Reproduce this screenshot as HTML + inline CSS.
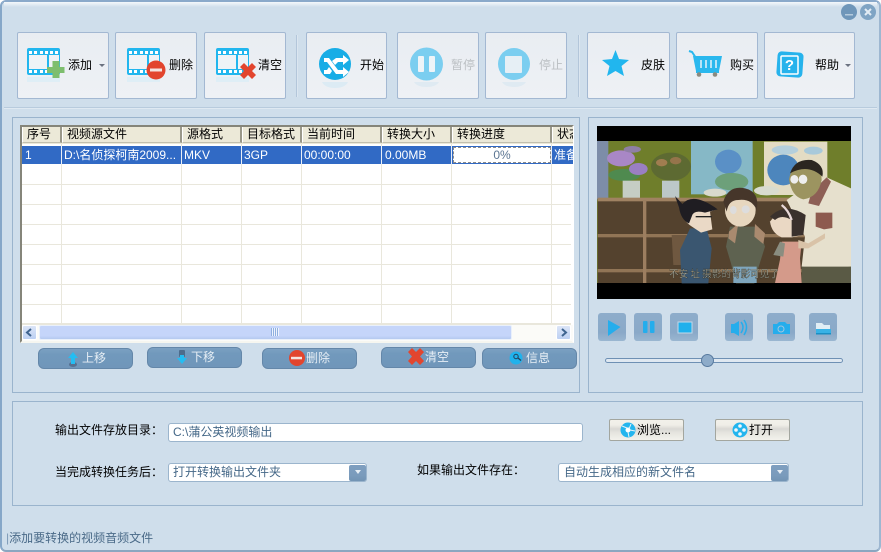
<!DOCTYPE html>
<html><head><meta charset="utf-8"><style>
html,body{margin:0;padding:0;width:881px;height:552px;overflow:hidden;background:#fff}
*{box-sizing:border-box}
body{font:12px/16px "WenQuanYi Zen Hei","Liberation Sans","Noto Sans CJK SC",sans-serif;color:#000;position:relative}
.a{position:absolute}
.t{position:absolute;white-space:nowrap;height:16px;line-height:16px}
#win{left:0;top:0;width:881px;height:552px;background:#cfdeeb;border:2px solid #86a7c8;border-top:2px solid #8aa9ca;border-radius:6px;border-right-color:#9db7d1;border-bottom-color:#8ba6c0}
#shine{left:4px;top:2px;width:873px;height:5px;background:linear-gradient(#f4f8fb,#cfdeeb)}
.tb{position:absolute;top:32px;height:67px;background:linear-gradient(#e9edf2,#eef1f5);border:1px solid #a3b8d2;border-radius:2px}
.sep{position:absolute;top:35px;height:62px;width:2px;background:#b3c6da;border-right:1px solid #dbe6f0}
.panel{position:absolute;border:1px solid #9ab4cd;background:#cfdeeb}
.bb{position:absolute;width:95px;height:21px;background:linear-gradient(#7ba0c2 0,#7199bc 30%,#7096ba 100%);border:1px solid #6487a9;border-radius:6px}
.cb{position:absolute;top:313px;width:28px;height:28px;background:linear-gradient(#8eadcb,#8aa9c8 70%,#9ab6d0);border-radius:3px}
.col{position:absolute;top:144px;width:1px;height:180px;background:#e9e7dc}
.row{position:absolute;left:22px;width:549px;height:1px;background:#e9e7dc}
.h{position:absolute;top:127px;height:16px;background:#ece9d8;border-right:2px solid #9a988a;border-left:1px solid #fff;border-bottom:1px solid #c2bfae;line-height:15px;white-space:nowrap;overflow:hidden;padding-left:4px}
.inp{position:absolute;background:#fff;border:1px solid #9bb5cd;border-radius:3px;color:#456888;padding-left:4px;line-height:17px;white-space:nowrap}
.wb{position:absolute;top:419px;width:75px;height:22px;background:linear-gradient(#f2f1ea 0,#f0eee8 25%,#d9d8d4 45%,#e4e3de 60%,#f3f2ec 100%);border:1px solid #a3a69f;border-radius:2px}
.arr{position:absolute;top:465px;width:17px;height:16px;background:linear-gradient(#7f9fc0,#7a9bbc 65%,#7294b4);border-radius:2px}
</style></head><body>
<div id="win" class="a"></div>
<div id="shine" class="a"></div>
<div class="a" style="left:4px;top:107px;width:873px;height:2px;background:#b8cbdd;border-bottom:1px solid #dfe9f2"></div>

<div class="tb" style="left:17px;width:92px"></div>
<div class="tb" style="left:115px;width:82px"></div>
<div class="tb" style="left:204px;width:82px"></div>
<div class="sep" style="left:296px"></div>
<div class="tb" style="left:306px;width:81px"></div>
<div class="tb" style="left:397px;width:82px"></div>
<div class="tb" style="left:485px;width:82px"></div>
<div class="sep" style="left:578px"></div>
<div class="tb" style="left:587px;width:83px"></div>
<div class="tb" style="left:676px;width:82px"></div>
<div class="tb" style="left:764px;width:91px"></div>

<div class="t" style="left:68px;top:57px">添加</div>
<div class="t" style="left:169px;top:57px">删除</div>
<div class="t" style="left:258px;top:57px">清空</div>
<div class="t" style="left:360px;top:57px">开始</div>
<div class="t" style="left:451px;top:57px;color:#bbbfc3">暂停</div>
<div class="t" style="left:539px;top:57px;color:#bbbfc3">停止</div>
<div class="t" style="left:641px;top:57px">皮肤</div>
<div class="t" style="left:730px;top:57px">购买</div>
<div class="t" style="left:815px;top:57px">帮助</div>

<div class="panel" style="left:12px;top:117px;width:568px;height:276px"></div>
<div class="panel" style="left:588px;top:117px;width:275px;height:276px"></div>
<div class="panel" style="left:12px;top:401px;width:851px;height:105px"></div>

<!-- list -->
<div class="a" style="left:20px;top:125px;width:554px;height:218px;background:#fff;border:2px solid;border-color:#85857a #fff #f6f6f0 #85857a"></div>
<div class="a" style="left:22px;top:127px;width:551px;height:17px;background:#ece9d8"></div>
<div class="h" style="left:22px;width:40px;padding-left:4px">序号</div>
<div class="h" style="left:62px;width:120px">视频源文件</div>
<div class="h" style="left:182px;width:60px">源格式</div>
<div class="h" style="left:242px;width:60px;padding-left:4px">目标格式</div>
<div class="h" style="left:302px;width:80px">当前时间</div>
<div class="h" style="left:382px;width:70px">转换大小</div>
<div class="h" style="left:452px;width:100px">转换进度</div>
<div class="h" style="left:552px;width:21px;border-right:0">状态</div>
<div class="col" style="left:61px"></div><div class="col" style="left:181px"></div><div class="col" style="left:241px"></div><div class="col" style="left:301px"></div><div class="col" style="left:381px"></div><div class="col" style="left:451px"></div><div class="col" style="left:551px"></div>
<div class="row" style="top:184px"></div><div class="row" style="top:204px"></div><div class="row" style="top:224px"></div><div class="row" style="top:244px"></div><div class="row" style="top:264px"></div><div class="row" style="top:284px"></div><div class="row" style="top:304px"></div><div class="row" style="top:323px;height:2px"></div>
<div class="a" style="left:22px;top:146px;width:551px;height:18px;background:#316ac5"></div>
<div class="a" style="left:61px;top:146px;width:1px;height:18px;background:#e9eef7"></div>
<div class="a" style="left:181px;top:146px;width:1px;height:18px;background:#e9eef7"></div>
<div class="a" style="left:241px;top:146px;width:1px;height:18px;background:#e9eef7"></div>
<div class="a" style="left:301px;top:146px;width:1px;height:18px;background:#e9eef7"></div>
<div class="a" style="left:381px;top:146px;width:1px;height:18px;background:#e9eef7"></div>
<div class="a" style="left:451px;top:146px;width:1px;height:18px;background:#e9eef7"></div>
<div class="a" style="left:551px;top:146px;width:1px;height:18px;background:#e9eef7"></div>
<div class="t" style="left:25px;top:147px;color:#fff">1</div>
<div class="t" style="left:64px;top:147px;color:#fff">D:\名侦探柯南2009...</div>
<div class="t" style="left:184px;top:147px;color:#fff">MKV</div>
<div class="t" style="left:244px;top:147px;color:#fff">3GP</div>
<div class="t" style="left:304px;top:147px;color:#fff">00:00:00</div>
<div class="t" style="left:385px;top:147px;color:#fff">0.00MB</div>
<div class="a" style="left:453px;top:147px;width:98px;height:16px;background:#fff;border:1px dashed #8b8b8b;text-align:center;line-height:14px;color:#5c7693">0%</div>
<div class="t" style="left:554px;top:147px;color:#fff;width:19px;overflow:hidden">准备</div>

<!-- scrollbar -->
<div class="a" style="left:22px;top:325px;width:551px;height:16px;background:#fbfbf8"></div>
<div class="a" style="left:22px;top:325px;width:15px;height:15px;background:linear-gradient(#dbe5f7,#bcd0f3);border:1px solid #fff;border-radius:2px"></div>
<div class="a" style="left:39px;top:325px;width:473px;height:15px;background:linear-gradient(#c5d5fa 75%,#b5c9ef);border:1px solid #e9f0fb;border-radius:2px"></div>
<div class="a" style="left:556px;top:325px;width:15px;height:15px;background:linear-gradient(#dbe5f7,#bcd0f3);border:1px solid #fff;border-radius:2px"></div>
<div class="a" style="left:271px;top:328px;width:8px;height:8px;background:repeating-linear-gradient(90deg,#8fb0e0 0 1px,#eef3fd 1px 2px)"></div>

<!-- list buttons -->
<div class="bb" style="left:38px;top:348px"></div>
<div class="bb" style="left:147px;top:347px"></div>
<div class="bb" style="left:262px;top:348px"></div>
<div class="bb" style="left:381px;top:347px"></div>
<div class="bb" style="left:482px;top:348px"></div>
<div class="t" style="left:82px;top:350px;color:#e6eef5">上移</div>
<div class="t" style="left:191px;top:349px;color:#e6eef5">下移</div>
<div class="t" style="left:306px;top:350px;color:#e6eef5">删除</div>
<div class="t" style="left:425px;top:349px;color:#e6eef5">清空</div>
<div class="t" style="left:526px;top:350px;color:#e6eef5">信息</div>

<!-- video -->
<svg class="a" style="left:597px;top:126px" width="254" height="173" viewBox="6 18 762 519" preserveAspectRatio="none">
<rect x="6" y="18" width="762" height="519" fill="#000"/>
<rect x="6" y="63" width="762" height="426" fill="#6f7e2b"/>
<rect x="6" y="63" width="34" height="175" fill="#7d8da8"/>
<rect x="288" y="63" width="185" height="160" fill="#86b8c6"/>
<ellipse cx="400" cy="125" rx="40" ry="36" fill="#5a90c6"/>
<ellipse cx="410" cy="185" rx="50" ry="26" fill="#6da07a"/>
<rect x="507" y="65" width="190" height="160" fill="#e3dcc4"/>
<ellipse cx="565" cy="150" rx="48" ry="46" fill="#4d86bd"/>
<ellipse cx="570" cy="90" rx="40" ry="14" fill="#b4cfdc"/>
<ellipse cx="655" cy="92" rx="28" ry="12" fill="#a8c9da"/>
<ellipse cx="360" cy="218" rx="34" ry="12" fill="#d9d9cd"/>
<ellipse cx="515" cy="212" rx="38" ry="14" fill="#d9dccf"/>
<ellipse cx="88" cy="165" rx="48" ry="18" fill="#4f8a4f"/>
<ellipse cx="78" cy="115" rx="42" ry="24" fill="#a987c6"/><ellipse cx="130" cy="147" rx="28" ry="18" fill="#9a7fc2"/><ellipse cx="112" cy="88" rx="26" ry="10" fill="#8f7fa5"/>
<rect x="83" y="182" width="52" height="54" fill="#c5cdc4"/>
<ellipse cx="228" cy="140" rx="60" ry="42" fill="#5d6a32"/><ellipse cx="200" cy="128" rx="17" ry="11" fill="#a07d50"/><ellipse cx="242" cy="122" rx="17" ry="11" fill="#95744b"/>
<rect x="201" y="182" width="52" height="54" fill="#bcc8c8"/>
<rect x="8" y="235" width="640" height="254" fill="#54422e"/>
<rect x="8" y="233" width="640" height="11" fill="#a08262"/>
<rect x="8" y="342" width="640" height="10" fill="#917556"/>
<rect x="8" y="447" width="640" height="10" fill="#917556"/>
<rect x="144" y="240" width="10" height="249" fill="#9c7e60"/>
<path d="M600 222 L695 172 768 205 768 440 680 450 620 440 630 350 575 240Z" fill="#e6e0cd"/>
<path d="M620 440h148v49H620z" fill="#5a5a45"/>
<path d="M662 278h50v46l-25 4-25-8z" fill="#8d5a4e"/>
<path d="M650 215 695 172 708 185 672 258 640 250Z" fill="#8d5f55"/>
<path d="M582 178 Q590 130 632 128 Q680 135 680 180 Q670 232 625 238 Q590 230 582 178Z" fill="#9c9460"/>
<path d="M585 160 Q600 115 650 120 Q690 135 682 170 Q640 130 585 160Z" fill="#2b2620"/>
<ellipse cx="598" cy="178" rx="12" ry="13" fill="#eee"/><ellipse cx="624" cy="178" rx="13" ry="14" fill="#eee"/>
<path d="M230 345h45v90h-40z" fill="#6f5840"/>
<path d="M285 325h50l15 60-10 105h-80l-5-100z" fill="#3a5670"/>
<path d="M255 262 Q295 215 365 268 L345 275 L352 328 L318 338 L288 318 Q262 300 255 262Z" fill="#ead9c6"/>
<path d="M240 228 262 252 Q295 215 368 268 L330 278 Q295 268 290 290 L282 310 Q258 300 252 262Z" fill="#1f1d22"/>
<rect x="302" y="288" width="48" height="4" fill="#222"/>
<path d="M405 320h85l20 60-22 70-10 40h-55l-15-60-15-50z" fill="#5e6250"/>
<path d="M402 335 430 310 420 370 400 355z" fill="#a98a6f"/><path d="M480 312 510 340 505 372 478 350z" fill="#a98a6f"/>
<path d="M415 440h70v49h-70z" fill="#7fa6bd"/>
<ellipse cx="436" cy="270" rx="46" ry="50" fill="#e7d7bf"/>
<path d="M385 245 Q400 195 450 205 Q495 215 485 270 Q470 235 430 240 Q400 240 395 275Z" fill="#46362a"/>
<ellipse cx="415" cy="270" rx="10" ry="12" fill="#ddd"/><ellipse cx="452" cy="268" rx="12" ry="12" fill="#ddd"/>
<path d="M560 365h60l-5 50 5 74h-80l15-70z" fill="#d49a8a"/>
<path d="M535 405 555 365 570 370 565 410z" fill="#8a8d80"/><path d="M610 360 640 370 690 340 690 355 640 385 610 385z" fill="#d9c3a8"/>
<path d="M525 305 Q570 245 632 285 L625 345 590 352 L560 352 Q530 340 525 305Z" fill="#ead8c4"/>
<path d="M525 290 Q570 245 632 285 L625 345 590 350 590 300 Q560 282 540 300Z" fill="#3a312d"/>
<path d="M560 255 Q580 270 590 300" stroke="#e8d8d8" stroke-width="7" fill="none"/>
<text x="222" y="472" textLength="330" lengthAdjust="spacingAndGlyphs" font-size="30" font-family="WenQuanYi Zen Hei,Noto Sans CJK SC,sans-serif" fill="#c9c9b8" stroke="#2a2a22" stroke-width="1">不安 址 摄影的背影可见了</text>
</svg>

<div class="cb" style="left:598px"></div><div class="cb" style="left:634px"></div><div class="cb" style="left:670px"></div><div class="cb" style="left:725px"></div><div class="cb" style="left:767px"></div><div class="cb" style="left:809px"></div>
<div class="a" style="left:605px;top:358px;width:238px;height:5px;background:#dfe8f1;border:1px solid #6e90b4;border-radius:3px"></div>
<div class="a" style="left:701px;top:354px;width:13px;height:13px;background:#8dabc9;border:1px solid #587a9f;border-radius:50%"></div>

<!-- form -->
<div class="t" style="left:55px;top:422px">输出文件存放目录：</div>
<div class="inp" style="left:168px;top:423px;width:415px;height:19px">C:\蒲公英视频输出</div>
<div class="t" style="left:55px;top:464px">当完成转换任务后：</div>
<div class="inp" style="left:168px;top:463px;width:199px;height:19px">打开转换输出文件夹</div>
<div class="arr" style="left:349px"></div>
<div class="t" style="left:417px;top:462px">如果输出文件存在：</div>
<div class="inp" style="left:558px;top:463px;width:231px;height:19px;padding-left:5px">自动生成相应的新文件名</div>
<div class="arr" style="left:771px"></div>
<div class="wb" style="left:609px"></div>
<div class="wb" style="left:715px"></div>
<div class="t" style="left:637px;top:422px">浏览...</div>
<div class="t" style="left:749px;top:422px">打开</div>
<div class="t" style="left:6px;top:530px;color:#4a6a88"><span style="color:#7d9ab6">|</span>添加要转换的视频音频文件</div>

<svg class="a" style="left:0;top:0" width="881" height="552" viewBox="0 0 881 552">
<defs>
<g id="film">
<rect width="33" height="27" rx="2" fill="#21b6ee"/>
<rect x="2" y="7" width="18" height="14" fill="#eef3f6"/><rect x="22" y="7" width="10" height="14" fill="#eef3f6"/>
<g fill="#fff"><rect x="2" y="3" width="3" height="3"/><rect x="7" y="3" width="3" height="3"/><rect x="13" y="3" width="3" height="3"/><rect x="18" y="3" width="3" height="3"/><rect x="23" y="3" width="3" height="3"/><rect x="28" y="3" width="3" height="3"/><rect x="2" y="22" width="3" height="3"/><rect x="7" y="22" width="3" height="3"/><rect x="13" y="22" width="3" height="3"/><rect x="18" y="22" width="3" height="3"/><rect x="23" y="22" width="3" height="3"/><rect x="28" y="22" width="3" height="3"/></g>
<rect y="29" width="33" height="5" fill="#d9edf7" opacity=".7"/>
</g>
</defs>
<!-- window buttons -->
<circle cx="849" cy="12" r="8" fill="#6f96b9"/><rect x="845" y="14" width="8" height="1.500" fill="#b5cbdd"/>
<circle cx="868" cy="12" r="8" fill="#7fa4c4"/><path d="M865 9 871 15M871 9 865 15" stroke="#e2ecf4" stroke-width="2"/>
<!-- toolbar icons -->
<use href="#film" x="27" y="48"/>
<path d="M52.500 61h7v6h5v6h-5v5h-7v-5h-5.500v-6h5.500z" fill="#7dbe6e"/>
<path d="M99 64h6l-3 3z" fill="#6b7280"/>
<use href="#film" x="127" y="48"/>
<circle cx="156" cy="70" r="9.500" fill="#e2452e"/><rect x="150" y="68.500" width="12" height="3" fill="#f4e4e0"/>
<use href="#film" x="216" y="48"/>
<path d="M240 67 244 63 248 67 252 63 256 67 252 71 256 75 252 79 248 75 244 79 240 75 244 71Z" fill="#e2452e"/>
<path d="M322 82h26q-3 6-13 6t-13-6z" fill="#dcebf4"/>
<circle cx="335" cy="64" r="16" fill="#18ade6"/>
<path d="M324 58h5l9 12h5v-3l6 5-6 5v-3h-7l-9-12h-3zM324 70h3l2-3 3 4-2 3h-6zM336 58h7v-3l6 5-6 5v-3h-5l-3 3-3-4z" fill="#fff"/>
<path d="M414 82h25q-3 5-12.500 5t-12.500-5z" fill="#dfeaf2"/>
<circle cx="426.500" cy="64" r="16.500" fill="#7bcef0"/>
<rect x="418" y="56" width="6" height="16" rx="1" fill="#eef4f8"/><rect x="429" y="56" width="6" height="16" rx="1" fill="#eef4f8"/>
<path d="M502 82h24q-3 5-12 5t-12-5z" fill="#dfeaf2"/>
<circle cx="514" cy="64" r="16" fill="#7bcef0"/>
<rect x="505" y="56" width="17" height="17" rx="1" fill="#e6eff5"/>
<path d="M615.500 50 619 59 629 60 621.500 66 624 76 615.500 71 607 76 609.500 66 602 60 612 59Z" fill="#21b6ee"/>
<path d="M689 51 692 52 696 58" stroke="#2ab8ee" stroke-width="2" fill="none"/>
<path d="M693 56h29l-3 15h-23z" fill="#2ab8ee"/>
<path d="M701 60v8M706 60v8M711 60v8M716 60v8" stroke="#e6f3fa" stroke-width="1.500"/>
<rect x="696" y="71" width="23" height="2" fill="#2ab8ee"/>
<circle cx="699" cy="74.500" r="2.300" fill="#8b8b80"/><circle cx="715" cy="74.500" r="2.300" fill="#8b8b80"/>
<rect x="777" y="52" width="26" height="25" rx="4" fill="#26b3ec" transform="rotate(4 790 64)"/>
<rect x="781" y="56" width="17" height="18" rx="1" fill="none" stroke="#fff" stroke-width="1.500"/>
<text x="789.500" y="70" text-anchor="middle" font-family="Liberation Sans,sans-serif" font-weight="bold" font-size="15" fill="#fff">?</text>
<path d="M845 64h6l-3 3z" fill="#6b7280"/>
<!-- list scroll arrows -->
<path d="M31 329 27 332.500 31 336" stroke="#3f6490" stroke-width="2" fill="none"/>
<path d="M562 329 566 332.500 562 336" stroke="#3f6490" stroke-width="2" fill="none"/>
<!-- list button icons -->
<ellipse cx="73" cy="364.500" rx="4" ry="2.500" fill="#567090"/>
<path d="M73 352 78 358h-3v6h-4v-6h-3z" fill="#25bdf2"/>
<rect x="179" y="350" width="6" height="7" rx="1" fill="#4e6c8c"/><path d="M182 364 177 358h3v-3h4v3h3z" fill="#25bdf2"/>
<circle cx="297" cy="358" r="8" fill="#e2452e"/><rect x="291" y="356.800" width="11" height="2.500" fill="#f4e4e0"/>
<path d="M408 352 412 348 416 352 420 348 424 352 420 356.500 424 361 420 365 416 361 412 365 408 361 412 356.500Z" fill="#e2452e"/>
<circle cx="516" cy="358" r="6.500" fill="#20b2ec"/><circle cx="516" cy="356.500" r="2.200" fill="none" stroke="#24405a" stroke-width="1"/><path d="M518 358 521 360.500" stroke="#24405a" stroke-width="1.300"/>
<!-- player icons -->
<path d="M608 320 620.500 327 608 336Z" fill="#25adec"/>
<rect x="643" y="321" width="4.500" height="12" rx="1" fill="#25adec"/><rect x="650" y="321" width="4.500" height="12" rx="1" fill="#25adec"/>
<rect x="678" y="322" width="14" height="11" fill="#1fb0ec" stroke="#c4d8e8"/>
<path d="M731 324h3l5-3v15l-5-3h-3z" fill="#25adec"/><path d="M741 322q4 5 0 11M744 320q5 7 0 15" stroke="#25adec" stroke-width="1.500" fill="none"/>
<path d="M773 324h4l2-2h6l2 2h3v10h-17z" fill="#25adec"/><circle cx="781" cy="329" r="3" fill="none" stroke="#9fc6e0"/>
<path d="M816 323h6l2 2h6v4h-14z" fill="#e1eef5"/><rect x="816" y="329" width="15" height="4" fill="#38b2e6"/><rect x="816" y="333" width="15" height="1.500" fill="#1a8fc4"/>
<!-- form icons -->
<circle cx="628" cy="430" r="7.500" fill="#23b5ee"/><circle cx="628" cy="430" r="2.500" fill="#fff"/><path d="M622 426l5 2M631 424l-2 5M635 431l-5-1M629 437l-1-5" stroke="#e8f3f8"/>
<circle cx="740" cy="430" r="7.500" fill="#23b5ee"/><g fill="#f2f8fb"><circle cx="740" cy="426" r="1.800"/><circle cx="740" cy="434" r="1.800"/><circle cx="736" cy="430" r="1.800"/><circle cx="744" cy="430" r="1.800"/></g>
<path d="M355 470h6l-3 4z" fill="#e6eef5"/>
<path d="M777 470h6l-3 4z" fill="#e6eef5"/>
</svg>
</body></html>
